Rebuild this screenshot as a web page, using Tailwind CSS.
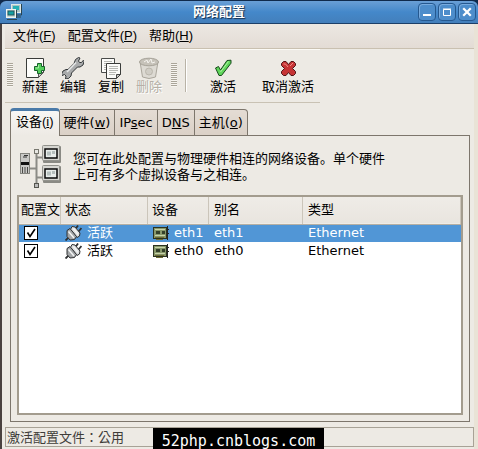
<!DOCTYPE html>
<html lang="zh-CN">
<head>
    <meta charset="UTF-8">
    <meta name="viewport" content="width=device-width, initial-scale=1.0">
    <title>网络配置</title>
    <script src="https://cdn.jsdelivr.net/npm/@tailwindcss/browser@4"></script>
    <style>
        body {
            font-family: "DejaVu Sans", "Noto Sans CJK SC", sans-serif;
        }
    </style>
</head>
<body class="relative flex h-screen flex-col overflow-hidden bg-[#102a4c] text-[13px] leading-4 text-black">

    <!-- Title bar -->
    <header class="mt-px grid h-[23px] shrink-0 grid-cols-[40px_1fr_80px] items-center rounded-t-md border-b border-[#1c3f68] bg-linear-to-b from-[#6a9fd6] via-[#4488ca] to-[#437fbb]">
        <svg class="ml-[6px] h-4 w-4" viewBox="0 0 16 16">
            <rect x="5.5" y=".5" width="9" height="8" fill="#a9c4c4" stroke="#dfe9e6"/>
            <rect x="7" y="2" width="6" height="4" fill="#26b0b4"/>
            <path d="M15.500 0v11H10" fill="none" stroke="#29434f"/>
            <rect x=".5" y="5.500" width="9" height="8" fill="#c9d8d4" stroke="#f0f4f0"/>
            <rect x="2" y="7" width="6" height="4" fill="#13a0a4" stroke="#24565c"/>
            <path d="M1 15.500h10M10.500 6v8M11 13h4" fill="none" stroke="#2d4650"/>
        </svg>
        <h1 class="text-center font-bold text-white [text-shadow:1px_1px_1px_#16304f]">网络配置</h1>
        <div class="flex justify-end gap-[2px] pr-[2px]">
            <button aria-label="最小化" class="h-[18px] w-[18px] rounded-sm border border-[#25588f] bg-[#4d8dcb] shadow-[inset_1px_1px_0_#78abdf]">
                <svg class="h-4 w-4" viewBox="0 0 16 16"><path d="M4 11h8" stroke="#fff" stroke-width="2"/></svg>
            </button>
            <button aria-label="最大化" class="h-[18px] w-[18px] rounded-sm border border-[#25588f] bg-[#4d8dcb] shadow-[inset_1px_1px_0_#78abdf]">
                <svg class="h-4 w-4" viewBox="0 0 16 16"><path d="M4.500 5.500h7v6h-7zM4 5h8" fill="none" stroke="#fff"/></svg>
            </button>
            <button aria-label="关闭" class="h-[18px] w-[18px] rounded-sm border border-[#25588f] bg-[#4d8dcb] shadow-[inset_1px_1px_0_#78abdf]">
                <svg class="h-4 w-4" viewBox="0 0 16 16"><path d="M5 5l6 6M11 5l-6 6" stroke="#fff" stroke-width="2.200" stroke-linecap="square"/></svg>
            </button>
        </div>
    </header>

    <div class="flex min-h-0 flex-1 flex-col border-l-2 border-r-4 border-l-[#4a4240] border-r-[#e9e3d6] bg-[#edeae4] pl-[3px]">

        <!-- Menu -->
        <nav class="flex h-[25px] shrink-0 items-center gap-3 border-b border-[#c9c0b0] bg-linear-to-b from-[#ece8e2] to-[#e3dcd5] pl-2 font-['Liberation_Sans','Noto_Sans_CJK_SC',sans-serif]">
            <button>文件(<u>F</u>)</button>
            <button>配置文件(<u>P</u>)</button>
            <button>帮助(<u>H</u>)</button>
        </nav>

        <!-- Toolbar -->
        <div class="flex h-[54px] w-[315px] shrink-0 items-start border-t border-b border-t-[#fbfaf6] border-b-[#c9c2b4] pt-[7px]">
            <div class="mt-[6px] ml-[2px] h-6 w-[6px] shrink-0 bg-[repeating-linear-gradient(#aaa599_0_1px,#f7f5f0_1px_2px)]"></div>

            <button class="ml-[3px] flex w-[38px] shrink-0 flex-col items-center">
                <svg class="h-[22px] w-[22px]" viewBox="0 0 22 22">
                    <path d="M2.500 1.500h17v14l-5 5h-12z" fill="#fdfdfb" stroke="#3a3c3a"/>
                    <path d="M19.500 15.500h-5v5z" fill="#c8cac5" stroke="#555"/>
                    <path d="M13.500 6.500h4v3h3v4h-3v3h-4v-3h-3v-4h3z" fill="#55cf5d" stroke="#17622a"/>
                    <path d="M14.500 8v3h-3" fill="none" stroke="#a4efa0"/>
                </svg>
                <span>新建</span>
            </button>
            <button class="flex w-[38px] shrink-0 flex-col items-center">
                <svg class="h-[22px] w-[22px]" viewBox="0 0 22 22">
                    <path d="M13.500 2.500l3-2 1.500.5-1.500 3 1 1.500h2l1.800-2.200.7 1.200-1 3.500-3 2h-2.500l-6 6-.5 3-2.500 2.500-3 .5.500-3-1.500-1.500-2.500 1-.5-1.500 1.500-3 3-1.500h2l6-6z" fill="#a9abac" stroke="#333739" stroke-linejoin="round"/>
                    <path d="M5 15L14 5.500" stroke="#e7e9e9" stroke-width="1.500"/>
                </svg>
                <span>编辑</span>
            </button>
            <button class="flex w-[38px] shrink-0 flex-col items-center">
                <svg class="h-[22px] w-[22px]" viewBox="0 0 22 22">
                    <path d="M1.500 1.500h13v14h-13z" fill="#fbfbf9" stroke="#4a4c4a"/>
                    <path d="M4 4.500h8M4 6.500h8M4 8.500h8M4 10.500h8M4 12.500h8" stroke="#b7b8b4"/>
                    <path d="M6.500 6.500h14v11l-4 4h-10z" fill="#fbfbf9" stroke="#3a3c3a"/>
                    <path d="M9 9.500h9M9 11.500h9M9 13.500h9M9 15.500h7M9 17.500h6" stroke="#b7b8b4"/>
                    <path d="M20.500 17.500h-4v4z" fill="#c4c6c2" stroke="#444"/>
                </svg>
                <span>复制</span>
            </button>
            <button disabled class="flex w-[38px] shrink-0 flex-col items-center text-[#b5b0a6] [text-shadow:1px_1px_0_#fff]">
                <svg class="h-[22px] w-[22px]" viewBox="0 0 22 22">
                    <path d="M2 4.500L4.500 20q6.500 3 13 0L20 4.500z" fill="#dddad3" stroke="#aaa69c"/>
                    <ellipse cx="11" cy="5" rx="9.500" ry="3.800" fill="#c6c2b9" stroke="#a6a298"/>
                    <path d="M6 5l3-2 1 3 3-4 1 4 3-1" fill="none" stroke="#f4f2ee"/>
                    <circle cx="11" cy="14.500" r="3.500" fill="#d0cdc5" stroke="#bab6ac"/>
                </svg>
                <span>删除</span>
            </button>

            <div class="mt-[6px] ml-[3px] h-6 w-[6px] shrink-0 bg-[repeating-linear-gradient(#aaa599_0_1px,#f7f5f0_1px_2px)]"></div>
            <div class="mt-[2px] ml-2 h-[33px] w-[2px] shrink-0 border-l border-r border-l-[#b9b3a6] border-r-white"></div>

            <button class="ml-[10px] flex w-[52px] shrink-0 flex-col items-center">
                <svg class="h-[22px] w-[22px]" viewBox="0 0 22 22">
                    <path d="M3.500 11l3-1.500 2 3.500 6.500-9.500 4-.3v3L9.500 18.500h-2.500z" fill="#5fd65a" stroke="#18491c" stroke-linejoin="round"/>
                    <path d="M8.500 15L16.500 4.500" stroke="#b5f3a8"/>
                </svg>
                <span>激活</span>
            </button>
            <button class="flex w-[78px] shrink-0 flex-col items-center">
                <svg class="h-[22px] w-[22px]" viewBox="0 0 22 22">
                    <path d="M4.500 6.500l2-2h2.500l2.500 3 2.500-3h2.500l2 2v2l-3 3 3 3v2l-2 2h-2.500l-2.500-3-2.500 3h-2.500l-2-2v-2l3-3-3-3z" fill="#c63435" stroke="#501416" stroke-linejoin="round"/>
                    <path d="M6.500 7l2 0 2.500 3M16 6l-3 3" fill="none" stroke="#ef8c86"/>
                </svg>
                <span>取消激活</span>
            </button>
        </div>

        <!-- Notebook -->
        <main class="mr-1 flex min-h-0 flex-1 flex-col pt-[5px] pl-[5px]">
            <div role="tablist" class="z-10 -mb-px flex h-7 shrink-0 items-end">
                <button role="tab" aria-selected="true" class="h-7 rounded-t-sm border border-t-3 border-b-0 border-[#7d766c] border-t-[#4a7aa8] bg-linear-to-b from-[#f8f7f5] to-[#edeae4] px-[5px] pb-[3px] font-['Liberation_Sans','Noto_Sans_CJK_SC',sans-serif]">设备(<u>i</u>)</button>
                <button role="tab" class="h-[27px] border border-l-0 border-[#7d766c] bg-linear-to-b from-[#e4dcd4] to-[#dbd1c7] px-1">硬件(<u>w</u>)</button>
                <button role="tab" class="h-[27px] border border-l-0 border-[#7d766c] bg-linear-to-b from-[#e4dcd4] to-[#dbd1c7] px-1">IP<u>s</u>ec</button>
                <button role="tab" class="h-[27px] border border-l-0 border-[#7d766c] bg-linear-to-b from-[#e4dcd4] to-[#dbd1c7] px-1">D<u>N</u>S</button>
                <button role="tab" class="h-[27px] rounded-tr-sm border border-l-0 border-[#7d766c] bg-linear-to-b from-[#e4dcd4] to-[#dbd1c7] px-1">主机(<u>o</u>)</button>
            </div>

            <section role="tabpanel" class="flex min-h-0 flex-1 flex-col border border-[#7d766c] p-[6px]">
                <div class="flex h-[53px] shrink-0 items-center gap-[11px] pb-1 pl-[2px]">
                    <svg class="h-11 w-[43px] shrink-0" viewBox="0 0 43 44">
                        <path d="M11 23.500h7M17.500 7v34M18 12.500h7M18 32.500h7" fill="none" stroke="#8b8b86" stroke-width="2"/>
                        <rect x="15.500" y="4.500" width="4" height="4" fill="#e8e8e4" stroke="#77776f"/>
                        <rect x="15.500" y="38.500" width="4" height="4" fill="#bbb" stroke="#55554f"/>
                        <rect x="1.500" y="8.500" width="9" height="20" fill="#c9c9c6" stroke="#85857f"/>
                        <path d="M4 12h4M5 10.500h4" stroke="#333"/>
                        <path d="M2 17h8v3H2z" fill="#111"/>
                        <path d="M3.500 22v6M6 22v6M8.500 22v6" stroke="#4b4b48"/>
                        <g id="monitor">
                            <rect x="24" y="1" width="18" height="17" rx="1" fill="#8a8a84"/>
                            <rect x="23.500" y=".5" width="17" height="15" rx="1" fill="#d6d6d1" stroke="#92928c"/>
                            <rect x="26" y="4" width="12" height="9" fill="#e8edeb" stroke="#080808" stroke-width="1.500"/>
                            <path d="M28 6.500h4v4h-4zM33 6h3v3h-3z" fill="#b5bfbd"/>
                        </g>
                        <use href="#monitor" y="20"/>
                    </svg>
                    <p>您可在此处配置与物理硬件相连的网络设备。单个硬件<br>上可有多个虚拟设备与之相连。</p>
                </div>

                <div class="min-h-0 flex-1 overflow-hidden border-2 border-[#a39c8e] bg-white">
                    <table class="w-full table-fixed border-collapse text-left">
                        <colgroup>
                            <col class="w-[42px]">
                            <col class="w-[87px]">
                            <col class="w-[61px]">
                            <col class="w-[94px]">
                            <col>
                        </colgroup>
                        <thead>
                            <tr class="h-[27px] border-b border-[#b5afa3] bg-linear-to-b from-[#efece7] to-[#e9e5df]">
                                <th class="overflow-hidden p-0 pl-[2px] font-normal whitespace-nowrap shadow-[inset_-1px_0_0_#cbc5ba]">配置文</th>
                                <th class="p-0 pl-1 font-normal shadow-[inset_-1px_0_0_#cbc5ba]">状态</th>
                                <th class="p-0 pl-1 font-normal shadow-[inset_-1px_0_0_#cbc5ba]">设备</th>
                                <th class="p-0 pl-[5px] font-normal shadow-[inset_-1px_0_0_#cbc5ba]">别名</th>
                                <th class="p-0 pl-[5px] font-normal shadow-[inset_-1px_0_0_#cbc5ba]">类型</th>
                            </tr>
                        </thead>
                        <tbody>
                            <tr class="h-[18px] bg-[#5196d6] text-white">
                                <td class="p-0 pl-[5px]">
                                    <label class="grid w-[14px]">
                                        <input type="checkbox" checked aria-label="eth1" class="col-start-1 row-start-1 h-[14px] w-[14px] appearance-none border border-black bg-white">
                                        <svg class="pointer-events-none col-start-1 row-start-1 h-[14px] w-[14px]" viewBox="0 0 14 14"><path d="M3.500 6.500l2.500 4 5-7.500" fill="none" stroke="#000" stroke-width="1.600"/></svg>
                                    </label>
                                </td>
                                <td class="p-0 pl-1">
                                    <div class="flex items-center gap-[5px]">
                                        <svg class="h-4 w-[17px]" viewBox="0 0 17 16">
                                            <g id="plug">
                                                <path d="M10.500 4L13 .5M13.500 6.500L16.500 3M.5 15.500l4-4" stroke="#2e3032" stroke-width="1.800"/>
                                                <path d="M7 1.500l3 .5 5 6-.5 3-2.500 1.500-6.500-8z" fill="#dcdedf" stroke="#303234"/>
                                                <path d="M2 5.500l3-2 6.500 8-2 3-4.500.5-3-3.500z" fill="#a3a6a8" stroke="#303234"/>
                                                <path d="M3.500 6.500l5.500 6.500M8.500 3.500l4.500 6" stroke="#f4f5f5" stroke-width="1.500"/>
                                            </g>
                                        </svg>
                                        <span>活跃</span>
                                    </div>
                                </td>
                                <td class="p-0 pl-[5px]">
                                    <div class="flex items-center gap-[5px]">
                                        <svg class="h-4 w-4 shrink-0" viewBox="0 0 16 16">
                                            <g id="card">
                                                <path d="M14.500 1v14M14 8.500h2M14 4.500h2" stroke="#222"/>
                                                <rect x=".5" y="2.500" width="13" height="11" fill="#87976a" stroke="#2c321f"/>
                                                <path d="M2 4.500h10M2 10.500h10" stroke="#c9d3a9"/>
                                                <path d="M3 6h4v3H3zM9 6h3v3H9z" fill="#34402a"/>
                                                <path d="M2 12.500h9M3 14.500h7" stroke="#6d6b34"/>
                                            </g>
                                        </svg>
                                        <span>eth1</span>
                                    </div>
                                </td>
                                <td class="p-0 pl-[5px]">eth1</td>
                                <td class="p-0 pl-[5px]">Ethernet</td>
                            </tr>
                            <tr class="h-[18px]">
                                <td class="p-0 pl-[5px]">
                                    <label class="grid w-[14px]">
                                        <input type="checkbox" checked aria-label="eth0" class="col-start-1 row-start-1 h-[14px] w-[14px] appearance-none border border-black bg-white">
                                        <svg class="pointer-events-none col-start-1 row-start-1 h-[14px] w-[14px]" viewBox="0 0 14 14"><path d="M3.500 6.500l2.500 4 5-7.500" fill="none" stroke="#000" stroke-width="1.600"/></svg>
                                    </label>
                                </td>
                                <td class="p-0 pl-1">
                                    <div class="flex items-center gap-[5px]">
                                        <svg class="h-4 w-[17px]" viewBox="0 0 17 16"><use href="#plug"/></svg>
                                        <span>活跃</span>
                                    </div>
                                </td>
                                <td class="p-0 pl-[5px]">
                                    <div class="flex items-center gap-[5px]">
                                        <svg class="h-4 w-4 shrink-0" viewBox="0 0 16 16"><use href="#card"/></svg>
                                        <span>eth0</span>
                                    </div>
                                </td>
                                <td class="p-0 pl-[5px]">eth0</td>
                                <td class="p-0 pl-[5px]">Ethernet</td>
                            </tr>
                        </tbody>
                    </table>
                </div>
            </section>
        </main>

        <!-- Status bar -->
        <footer lang="zh-TW" class="mt-[5px] mb-[2px] flex h-5 shrink-0 items-center border border-[#a8a296] pl-px font-['Noto_Sans_CJK_TC',sans-serif] text-[#3f3d3a]">激活配置文件：公用</footer>
    </div>

    <!-- Watermark -->
    <div class="absolute bottom-0 left-[153px] flex h-[21px] w-[171px] items-center justify-center bg-black pt-1 font-['DejaVu_Sans_Mono',monospace] text-[15px] text-white">52php.cnblogs.com</div>
</body>
</html>
